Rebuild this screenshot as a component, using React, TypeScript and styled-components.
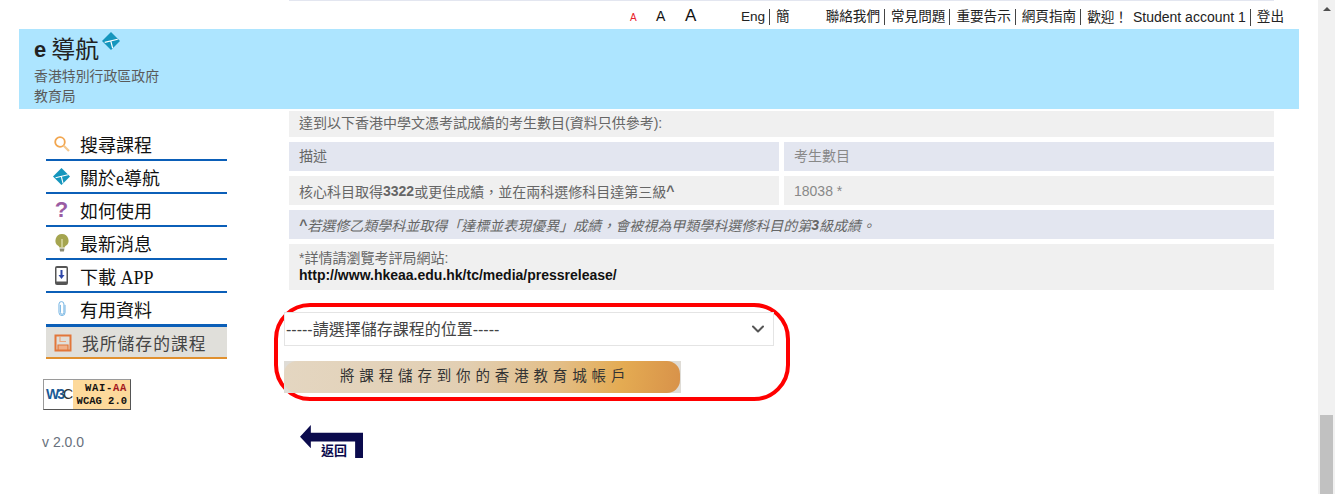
import React from 'react'
import styled, { createGlobalStyle } from 'styled-components'
import { ChevronDown } from 'lucide-react'

const GlobalStyle = createGlobalStyle`
  html, body {
    margin: 0;
    padding: 0;
    background: #fff;
    overflow: hidden;
  }
  body {
    font-family: "Liberation Sans", "Noto Sans CJK TC", sans-serif;
  }
`

const Shell = styled.div`
  display: flex;
  width: 1335px;
  height: 494px;
  overflow: hidden;
`
const Page = styled.div`
  width: 1318px;
  display: flex;
  flex-direction: column;
`
const Scrollbar = styled.div`
  width: 17px;
  background: #f1f1f1;
  display: flex;
  flex-direction: column;
  justify-content: space-between;
  align-items: center;
`
const ScrollArrow = styled.div`
  margin-top: 7px;
  width: 0;
  height: 0;
  border-left: 4px solid transparent;
  border-right: 4px solid transparent;
  border-bottom: 4px solid #505050;
`
const ScrollThumb = styled.div`
  width: 13px;
  height: 79px;
  background: #c1c1c1;
`
const TopEdge = styled.div`
  height: 1px;
  margin: 0 44px 0 289px;
  background: #e3e6f0;
`
const TopBar = styled.div`
  height: 28px;
  padding: 4px 34px 0 0;
  box-sizing: border-box;
  display: flex;
  align-items: center;
  justify-content: flex-end;
  color: #222;
  font-size: 13.6px;
`
const SizeLink = styled.span<{ $size: number; $red?: boolean; $w: number }>`
  font-size: ${p => p.$size}px;
  color: ${p => (p.$red ? '#e8202a' : '#111')};
  width: ${p => p.$w}px;
  line-height: 20px;
`
const Sizes = styled.div`
  display: flex;
  align-items: baseline;
`
const Group = styled.div<{ $gap: number }>`
  display: flex;
  align-items: center;
  margin-right: ${p => p.$gap}px;
`
const BarItem = styled.span<{ $last?: boolean }>`
  padding: 0 ${p => (p.$last ? 0 : 4)}px 0 6px;
  border-right: ${p => (p.$last ? 'none' : '1px solid #444')};
  line-height: 16px;
  white-space: nowrap;
`
const Account = styled.span`
  font-size: 14px;
  margin-left: 5px;
`
const Banner = styled.header`
  width: 1280px;
  height: 80px;
  margin-left: 19px;
  padding: 4px 0 0 15px;
  box-sizing: border-box;
  background: #ade5ff;
  color: #5a5a5a;
`
const BrandRow = styled.div`
  display: flex;
  align-items: flex-start;
  height: 33px;
  color: #222;
`
const BrandE = styled.span`
  font-size: 22px;
  font-weight: 700;
  line-height: 34px;
  margin-right: 5px;
`
const BrandName = styled.span`
  font-size: 24px;
  line-height: 34px;
  margin-right: 3px;
`
const BrandMark = styled.span`
  display: flex;
  margin-top: -1px;
`
const BannerLine = styled.div`
  font-size: 13.9px;
  line-height: 20px;
`
const Body = styled.div`
  display: flex;
  flex: 1;
`
const Sidebar = styled.aside`
  width: 228px;
  flex: none;
  display: flex;
  flex-direction: column;
`
const Nav = styled.nav`
  margin: 19px 0 0 46px;
  width: 181px;
`
const NavItem = styled.div<{ $thick?: boolean }>`
  height: ${p => (p.$thick ? 34 : 33)}px;
  box-sizing: border-box;
  display: flex;
  align-items: center;
  border-bottom: ${p => (p.$thick ? 3 : 2)}px solid #0b5fb8;
  color: #111;
  font-family: "Liberation Serif", "Noto Sans CJK TC", serif;
  font-size: 18px;
`
const ActiveItem = styled.div`
  height: 32px;
  box-sizing: border-box;
  display: flex;
  align-items: center;
  padding-top: 2px;
  background: #e0dfda;
  border-bottom: 2px solid #e0902f;
  color: #444;
  font-size: 16.8px;
  letter-spacing: 1px;
`
const NavIcon = styled.span<{ $wide?: boolean }>`
  width: ${p => (p.$wide ? 36 : 34)}px;
  flex: none;
  display: flex;
  justify-content: center;
  padding-right: 3px;
  box-sizing: border-box;
`
const Question = styled.span`
  font-family: "Liberation Sans", sans-serif;
  font-size: 22px;
  font-weight: 700;
  color: #9a5ca3;
  line-height: 20px;
`
const Badge = styled.div`
  display: flex;
  width: 88px;
  height: 31px;
  margin: 20px 0 0 43px;
  box-sizing: border-box;
  border: 1px solid #9a9a9a;
  border-right-color: #555;
  border-bottom-color: #555;
`
const BadgeLogo = styled.div`
  width: 29px;
  flex: none;
  background: #fff;
  color: #1a5a96;
  font-size: 14px;
  font-weight: 700;
  letter-spacing: -2px;
  line-height: 28px;
  padding-left: 2px;
  box-sizing: border-box;
`
const BadgeC = styled.span`
  color: #333;
  font-weight: 400;
`
const BadgeText = styled.div`
  flex: 1;
  background: #fdd99b;
  color: #111;
  font-family: "Liberation Mono", monospace;
  font-size: 10.5px;
  font-weight: 700;
  line-height: 13px;
  text-align: right;
  white-space: nowrap;
  padding: 2px 3px 0 0;
`
const BadgeTop = styled.div`
  letter-spacing: 0.7px;
`
const BadgeRed = styled.span`
  color: #a3161c;
`
const Version = styled.div`
  margin: 24px 0 0 42px;
  color: #68707c;
  font-size: 14px;
  line-height: 16px;
`
const Content = styled.main`
  flex: 1;
  padding: 2px 0 0 46px;
`
const InfoGrid = styled.div`
  display: grid;
  grid-template-columns: 490px 490px;
  gap: 5px;
  margin-left: 15px;
  color: #666;
  font-size: 14px;
`
const Cell = styled.div<{
  $tone?: 'blue' | 'grey'
  $wide?: boolean
  $h?: number
  $italic?: boolean
  $lift?: number
  $faint?: boolean
}>`
  grid-column: ${p => (p.$wide ? '1 / span 2' : 'auto')};
  height: ${p => p.$h ?? 29}px;
  box-sizing: border-box;
  padding: 0 0 ${p => p.$lift ?? 0}px 10px;
  display: flex;
  align-items: center;
  background: ${p => (p.$tone === 'blue' ? '#e3e6f0' : '#f0f0f0')};
  color: ${p => (p.$faint ? '#888' : 'inherit')};
  font-style: ${p => (p.$italic ? 'italic' : 'normal')};
  white-space: pre;
`
const NoteCell = styled.div`
  grid-column: 1 / span 2;
  height: 46px;
  box-sizing: border-box;
  padding: 6px 0 0 10px;
  background: #f0f0f0;
  line-height: 16px;
`
const PressLink = styled.div`
  color: #111;
  font-weight: 700;
  margin-top: 1px;
`
const SaveBox = styled.div`
  width: 516px;
  height: 98px;
  box-sizing: border-box;
  margin-top: 13px;
  padding: 5px 0 0 6px;
  border: 4px solid #f00;
  border-radius: 36px;
`
const SelectWrap = styled.div`
  position: relative;
  width: 490px;
  height: 34px;
`
const Select = styled.select`
  appearance: none;
  width: 100%;
  height: 100%;
  padding: 0 0 0 1px;
  border: 1px solid #e4e4e4;
  background: #fff;
  color: #444;
  font-family: inherit;
  font-size: 16px;
`
const SelectChevron = styled(ChevronDown)`
  position: absolute;
  right: 6px;
  top: 7px;
  color: #555;
  pointer-events: none;
`
const SaveButton = styled.div`
  width: 397px;
  height: 32px;
  margin-top: 15px;
  background: #dfdcd6;
  display: flex;
`
const SavePill = styled.div`
  flex: 1;
  margin-right: 1px;
  border-radius: 13px;
  background: linear-gradient(97deg, #e4d6c1 0%, #e2cfb3 45%, #e3bd84 70%, #e4ab52 85%, #d8924a 100%);
  color: #333;
  font-size: 14.5px;
  letter-spacing: 4.85px;
  line-height: 31px;
  padding-left: 56px;
  box-sizing: border-box;
  white-space: nowrap;
`
const BackLink = styled.div`
  position: relative;
  width: 64px;
  height: 34px;
  margin: 24px 0 0 26px;
`
const BackLabel = styled.span`
  position: absolute;
  left: 21px;
  top: 19px;
  color: #0b0b4d;
  font-size: 13px;
  font-weight: 700;
  line-height: 14px;
`

const Diamond = ({ size }: { size: number }) => (
  <svg width={size} height={size} viewBox="0 0 20 20">
    <path d="M10 0 20 10 10 20 0 10Z" fill="#1596bd" />
    <path d="M3 11.500 17.500 8M9.800 10l2 8" stroke="#fff" strokeWidth="1.300" fill="none" />
  </svg>
)

const navItems: { label: string; icon: React.ReactNode; thick?: boolean }[] = [
  {
    label: '搜尋課程',
    icon: (
      <svg width="18" height="18" viewBox="0 0 18 18" fill="none">
        <circle cx="7" cy="7" r="4.800" stroke="#f2a64f" strokeWidth="1.800" />
        <path d="M10.500 10.500 16 16" stroke="#f5c98f" strokeWidth="2.200" />
      </svg>
    ),
  },
  { label: '關於e導航', icon: <Diamond size={17} /> },
  { label: '如何使用', icon: <Question>?</Question> },
  {
    label: '最新消息',
    icon: (
      <svg width="16" height="20" viewBox="0 0 16 20">
        <path d="M8 1a6.500 6.500 0 0 0-3.500 12c.6.5.8 1 .8 1.600h5.400c0-.6.2-1.100.8-1.600A6.500 6.500 0 0 0 8 1Z" fill="#a5a550" />
        <path d="M8 6v8" stroke="#e4e4b8" strokeWidth="1.200" />
        <path d="M5.500 15.500h5l-.6 3H6.100Z" fill="#8b8b72" />
      </svg>
    ),
  },
  {
    label: '下載 APP',
    icon: (
      <svg width="15" height="21" viewBox="0 0 15 21">
        <rect x="1" y="1" width="13" height="19" rx="2" fill="#555" />
        <rect x="2.500" y="3" width="10" height="13.500" fill="#fff" />
        <path d="M7.500 5v6" stroke="#2f47a8" strokeWidth="2" />
        <path d="M4.500 10h6l-3 4Z" fill="#2f47a8" />
      </svg>
    ),
  },
  {
    label: '有用資料',
    thick: true,
    icon: (
      <svg width="8" height="19" viewBox="0 0 10 19" fill="none">
        <path d="M3 5v9.500a2.200 2.200 0 0 0 4.400 0V4A3 3 0 0 0 1.200 4v10.500a3.800 3.800 0 0 0 7.600 0V5" stroke="#6fb2e2" strokeWidth="1.200" />
      </svg>
    ),
  },
]

export default function App() {
  return (
    <Shell>
      <GlobalStyle />
      <Page>
        <TopEdge />
        <TopBar>
          <Sizes>
            <SizeLink $size={10} $red $w={26}>A</SizeLink>
            <SizeLink $size={14} $w={29}>A</SizeLink>
            <SizeLink $size={17} $w={50}>A</SizeLink>
          </Sizes>
          <Group $gap={30}>
            <BarItem>Eng</BarItem>
            <BarItem $last>簡</BarItem>
          </Group>
          <BarItem>聯絡我們</BarItem>
          <BarItem>常見問題</BarItem>
          <BarItem>重要告示</BarItem>
          <BarItem>網頁指南</BarItem>
          <BarItem>
            歡迎！<Account>Student account 1</Account>
          </BarItem>
          <BarItem $last>登出</BarItem>
        </TopBar>
        <Banner>
          <BrandRow>
            <BrandE>e</BrandE>
            <BrandName>導航</BrandName>
            <BrandMark>
              <Diamond size={18} />
            </BrandMark>
          </BrandRow>
          <BannerLine>香港特別行政區政府</BannerLine>
          <BannerLine>教育局</BannerLine>
        </Banner>
        <Body>
          <Sidebar>
            <Nav>
              {navItems.map(item => (
                <NavItem key={item.label} $thick={item.thick}>
                  <NavIcon>{item.icon}</NavIcon>
                  {item.label}
                </NavItem>
              ))}
              <ActiveItem>
                <NavIcon $wide>
                  <svg width="18" height="18" viewBox="0 0 18 18" fill="none">
                    <path d="M1.500 1.500h15v15h-15Z" stroke="#e2773a" strokeWidth="2" />
                    <path d="M6 2v5.500h6" stroke="#eda67c" strokeWidth="1.200" />
                    <path d="M4 11h10v5H4Z" fill="#efb08a" stroke="#e2773a" strokeWidth="1.200" />
                  </svg>
                </NavIcon>
                我所儲存的課程
              </ActiveItem>
            </Nav>
            <Badge>
              <BadgeLogo>
                W3<BadgeC>C</BadgeC>
              </BadgeLogo>
              <BadgeText>
                <BadgeTop>WAI-<BadgeRed>AA</BadgeRed></BadgeTop>
                WCAG 2.0
              </BadgeText>
            </Badge>
            <Version>v 2.0.0</Version>
          </Sidebar>
          <Content>
            <InfoGrid>
              <Cell $wide $h={26} $lift={4}>達到以下香港中學文憑考試成績的考生數目(資料只供參考):</Cell>
              <Cell $tone="blue" $lift={4}>描述</Cell>
              <Cell $tone="blue" $lift={4} $faint>考生數目</Cell>
              <Cell>核心科目取得<b>3322</b>或更佳成績，並在兩科選修科目達第三級<b>^</b></Cell>
              <Cell $faint>18038 *</Cell>
              <Cell $wide $tone="blue" $italic><b>^</b>若選修乙類學科並取得「達標並表現優異」成績，會被視為甲類學科選修科目的第<b>3</b>級成績。</Cell>
              <NoteCell>
                *詳情請瀏覽考評局網站:
                <PressLink>http://www.hkeaa.edu.hk/tc/media/pressrelease/</PressLink>
              </NoteCell>
            </InfoGrid>
            <SaveBox>
              <SelectWrap>
                <Select defaultValue="">
                  <option value="">-----請選擇儲存課程的位置-----</option>
                </Select>
                <SelectChevron size={20} strokeWidth={2.400} />
              </SelectWrap>
              <SaveButton>
                <SavePill>將課程儲存到你的香港教育城帳戶</SavePill>
              </SaveButton>
            </SaveBox>
            <BackLink>
              <svg width="63" height="33" viewBox="0 0 64 34" preserveAspectRatio="none">
                <path d="M0 12 11 0v8h53v26h-8V17H11v7Z" fill="#0b0b4d" />
              </svg>
              <BackLabel>返回</BackLabel>
            </BackLink>
          </Content>
        </Body>
      </Page>
      <Scrollbar>
        <ScrollArrow />
        <ScrollThumb />
      </Scrollbar>
    </Shell>
  )
}
